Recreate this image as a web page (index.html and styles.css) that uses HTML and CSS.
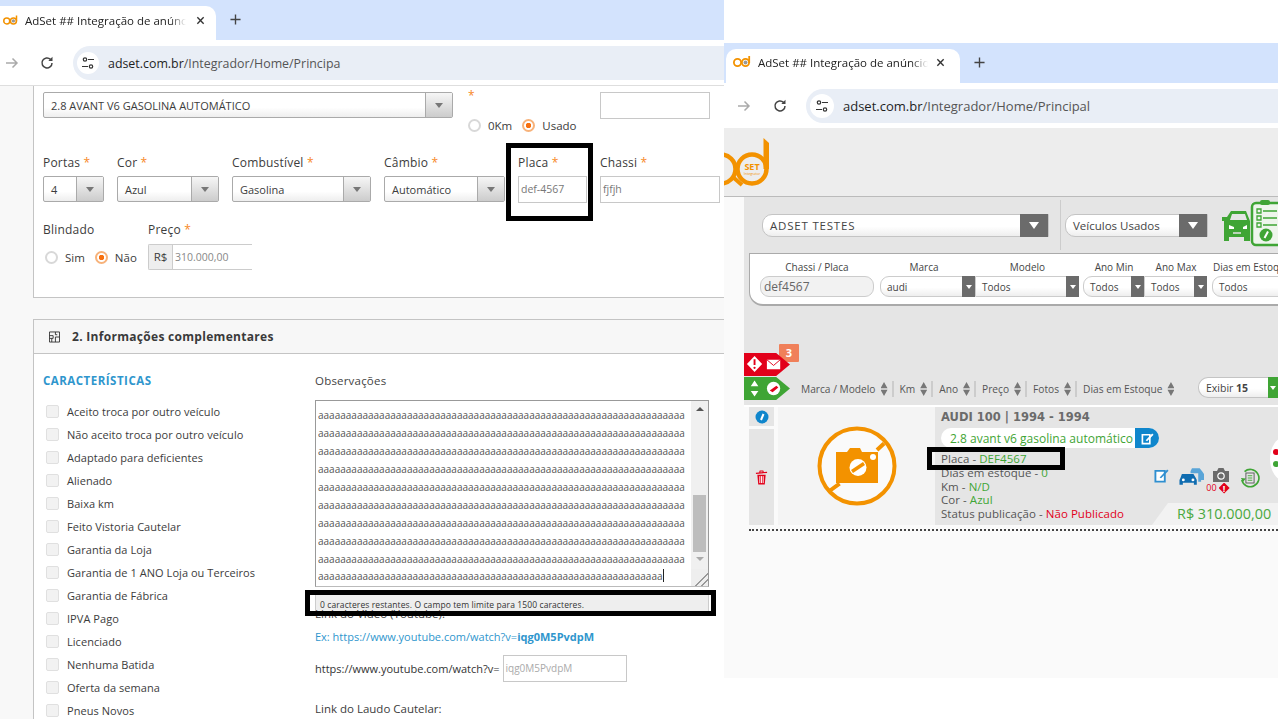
FILE: index.html
```html
<!DOCTYPE html>
<html lang="pt-br">
<head>
<meta charset="utf-8">
<title>AdSet</title>
<link rel="stylesheet" href="styles.css">
</head>
<body>
<div class="shots">

  <!-- left screenshot: ad form -->
  <section class="shot shot-left">
    <div class="tabstrip">
      <div class="tab">
        <svg class="favicon" viewBox="0 0 18 12"><circle cx="4.5" cy="6.5" r="3.6" fill="none" stroke="#f39200" stroke-width="1.8"/><circle cx="12.5" cy="6.5" r="3.6" fill="none" stroke="#f39200" stroke-width="1.8"/><path d="M16.2 0v7" stroke="#f39200" stroke-width="1.8"/><circle cx="12.5" cy="6.5" r="2" fill="#999"/></svg>
        <span class="tab-title">AdSet ## Integração de anúncio</span>
        <svg class="tab-close" viewBox="0 0 10 10"><path d="M1.5 1.5l7 7M8.5 1.5l-7 7" stroke="#333" stroke-width="1.5"/></svg>
      </div>
      <svg class="tab-new" viewBox="0 0 12 12"><path d="M6 .5v11M.5 6h11" stroke="#444" stroke-width="1.5"/></svg>
    </div>
    <div class="toolbar">
      <svg class="nav nav-fwd" viewBox="0 0 14 14"><path d="M1 7h11M7.5 2.5L12 7l-4.5 4.5" fill="none" stroke="#aaa" stroke-width="1.5"/></svg>
      <svg class="nav nav-reload" viewBox="0 0 14 14"><path d="M12 7a5 5 0 1 1-1.500-3.600" fill="none" stroke="#444" stroke-width="1.5"/><path d="M12.500 .8v4.200H8.300z" fill="#444"/></svg>
      <div class="omnibox">
        <span class="site-icon"><svg viewBox="0 0 14 14"><circle cx="4" cy="3.500" r="1.700" fill="none" stroke="#333" stroke-width="1.200"/><path d="M7 3.500h6M1 10.500h6" stroke="#333" stroke-width="1.200"/><circle cx="10" cy="10.500" r="1.700" fill="none" stroke="#333" stroke-width="1.200"/></svg></span>
        <span class="url"><b>adset.com.br</b>/Integrador/Home/Principa</span>
      </div>
    </div>
    <div class="form-page">
      <div class="form-panel">
        <div class="form-top">
          <div class="select select-model"><span>2.8 AVANT V6 GASOLINA AUTOMÁTICO</span><i class="select-arrow"></i></div>
          <div class="km-group">
            <span class="req">*</span>
            <div class="radios">
              <i class="radio"></i><span>0Km</span>
              <i class="radio radio-on"></i><span>Usado</span>
            </div>
          </div>
          <div class="input input-top"></div>
        </div>
        <div class="form-row">
          <div class="field"><label>Portas <em>*</em></label><div class="select"><span>4</span><i class="select-arrow"></i></div></div>
          <div class="field"><label>Cor <em>*</em></label><div class="select"><span>Azul</span><i class="select-arrow"></i></div></div>
          <div class="field"><label>Combustível <em>*</em></label><div class="select"><span>Gasolina</span><i class="select-arrow"></i></div></div>
          <div class="field"><label>Câmbio <em>*</em></label><div class="select"><span>Automático</span><i class="select-arrow"></i></div></div>
          <div class="field"><label>Placa <em>*</em></label><div class="input">def-4567</div></div>
          <div class="field"><label>Chassi <em>*</em></label><div class="input">fjfjh</div></div>
        </div>
        <div class="form-row-price">
          <div class="field field-armor">
            <label>Blindado</label>
            <div class="radios radios-armor">
              <i class="radio"></i><span>Sim</span>
              <i class="radio radio-on"></i><span>Não</span>
            </div>
          </div>
          <div class="field field-price">
            <label>Preço <em>*</em></label>
            <div class="price-input"><span class="addon">R$</span><span class="price-value">310.000,00</span></div>
          </div>
        </div>
      </div>

      <div class="info-panel">
        <div class="info-head">
          <svg class="info-icon" viewBox="0 0 12 12"><path d="M.5.500h11v11H.5zM.5 4.500h4v3h-4M7 .500v3h2M7 6h4.500M7 6v5.500M3 7.500v4" fill="none" stroke="#333"/></svg>
          <h2>2. Informações complementares</h2>
        </div>
        <div class="info-body">
          <div class="features">
            <h3>CARACTERÍSTICAS</h3>
            <ul class="check-list">
              <li>Aceito troca por outro veículo</li>
              <li>Não aceito troca por outro veículo</li>
              <li>Adaptado para deficientes</li>
              <li>Alienado</li>
              <li>Baixa km</li>
              <li>Feito Vistoria Cautelar</li>
              <li>Garantia da Loja</li>
              <li>Garantia de 1 ANO Loja ou Terceiros</li>
              <li>Garantia de Fábrica</li>
              <li>IPVA Pago</li>
              <li>Licenciado</li>
              <li>Nenhuma Batida</li>
              <li>Oferta da semana</li>
              <li>Pneus Novos</li>
            </ul>
          </div>
          <div class="notes">
            <div class="notes-label">Observações</div>
            <div class="notes-box">
              <div class="notes-text">
                <p>aaaaaaaaaaaaaaaaaaaaaaaaaaaaaaaaaaaaaaaaaaaaaaaaaaaaaaaaaaaaaaaaaa</p>
                <p>aaaaaaaaaaaaaaaaaaaaaaaaaaaaaaaaaaaaaaaaaaaaaaaaaaaaaaaaaaaaaaaaaa</p>
                <p>aaaaaaaaaaaaaaaaaaaaaaaaaaaaaaaaaaaaaaaaaaaaaaaaaaaaaaaaaaaaaaaaaa</p>
                <p>aaaaaaaaaaaaaaaaaaaaaaaaaaaaaaaaaaaaaaaaaaaaaaaaaaaaaaaaaaaaaaaaaa</p>
                <p>aaaaaaaaaaaaaaaaaaaaaaaaaaaaaaaaaaaaaaaaaaaaaaaaaaaaaaaaaaaaaaaaaa</p>
                <p>aaaaaaaaaaaaaaaaaaaaaaaaaaaaaaaaaaaaaaaaaaaaaaaaaaaaaaaaaaaaaaaaaa</p>
                <p>aaaaaaaaaaaaaaaaaaaaaaaaaaaaaaaaaaaaaaaaaaaaaaaaaaaaaaaaaaaaaaaaaa</p>
                <p>aaaaaaaaaaaaaaaaaaaaaaaaaaaaaaaaaaaaaaaaaaaaaaaaaaaaaaaaaaaaaaaaaa</p>
                <p>aaaaaaaaaaaaaaaaaaaaaaaaaaaaaaaaaaaaaaaaaaaaaaaaaaaaaaaaaaaaaaaaaa</p>
                <p class="notes-last">aaaaaaaaaaaaaaaaaaaaaaaaaaaaaaaaaaaaaaaaaaaaaaaaaaaaaaaaaaaaaa</p>
              </div>
              <div class="scrollbar">
                <i class="scroll-up"></i>
                <i class="scroll-thumb"></i>
                <i class="scroll-down"></i>
                <i class="scroll-corner"></i>
              </div>
            </div>
            <div class="notes-count">0 caracteres restantes. O campo tem limite para 1500 caracteres.</div>
            <div class="link-title">Link do Vídeo (Youtube):</div>
            <div class="link-example">Ex: https://www.youtube.com/watch?v=<b>iqg0M5PvdpM</b></div>
            <div class="link-row"><span>https://www.youtube.com/watch?v=</span><div class="input input-video">iqg0M5PvdpM</div></div>
            <div class="link-title link-report">Link do Laudo Cautelar:</div>
          </div>
        </div>
      </div>
    </div>
    <div class="mark mark-plate"></div>
    <div class="mark mark-count"></div>
  </section>

  <!-- right screenshot: stock list -->
  <section class="shot shot-right">
    <div class="tabstrip">
      <div class="tab">
        <svg class="favicon" viewBox="0 0 18 12"><circle cx="4.500" cy="6.500" r="3.600" fill="none" stroke="#f39200" stroke-width="1.800"/><circle cx="12.500" cy="6.500" r="3.600" fill="none" stroke="#f39200" stroke-width="1.800"/><path d="M16.200 0v7" stroke="#f39200" stroke-width="1.800"/><circle cx="12.500" cy="6.500" r="2" fill="#999"/></svg>
        <span class="tab-title">AdSet ## Integração de anúncio</span>
        <svg class="tab-close" viewBox="0 0 10 10"><path d="M1.500 1.500l7 7M8.500 1.500l-7 7" stroke="#333" stroke-width="1.500"/></svg>
      </div>
      <svg class="tab-new" viewBox="0 0 12 12"><path d="M6 .5v11M.5 6h11" stroke="#444" stroke-width="1.500"/></svg>
    </div>
    <div class="toolbar">
      <svg class="nav nav-fwd" viewBox="0 0 14 14"><path d="M1 7h11M7.500 2.500L12 7l-4.500 4.500" fill="none" stroke="#aaa" stroke-width="1.500"/></svg>
      <svg class="nav nav-reload" viewBox="0 0 14 14"><path d="M12 7a5 5 0 1 1-1.500-3.600" fill="none" stroke="#444" stroke-width="1.500"/><path d="M12.500 .8v4.200H8.300z" fill="#444"/></svg>
      <div class="omnibox">
        <span class="site-icon"><svg viewBox="0 0 14 14"><circle cx="4" cy="3.500" r="1.700" fill="none" stroke="#333" stroke-width="1.200"/><path d="M7 3.500h6M1 10.500h6" stroke="#333" stroke-width="1.200"/><circle cx="10" cy="10.500" r="1.700" fill="none" stroke="#333" stroke-width="1.200"/></svg></span>
        <span class="url"><b>adset.com.br</b>/Integrador/Home/Principal</span>
      </div>
    </div>
    <header class="brand">
      <svg class="logo" viewBox="0 0 46 60">
        <circle cx="-3" cy="39" r="14.500" fill="none" stroke="#f39200" stroke-width="4.500"/>
        <path d="M10 48l8 7" stroke="#f39200" stroke-width="4"/>
        <circle cx="28" cy="39" r="14.500" fill="none" stroke="#f39200" stroke-width="4.500"/>
        <path d="M39.500 8l5.500 5v26h-5.500z" fill="#f39200"/>
        <text x="28" y="40" class="logo-text">SET</text>
        <text x="28" y="45" class="logo-sub">Integrator</text>
      </svg>
    </header>
    <div class="stock">
      <div class="stock-main">
        <div class="store-bar">
          <div class="pill-select pill-store"><span>ADSET TESTES</span><i class="pill-arrow"></i></div>
          <i class="store-divider"></i>
          <div class="pill-select pill-type"><span>Veículos Usados</span><i class="pill-arrow"></i></div>
          <svg class="car-report" viewBox="8 0 56 56">
            <rect x="38" y="7" width="32" height="42" rx="4" fill="#eef5ec" stroke="#3fa535" stroke-width="2.500"/>
            <rect x="46" y="4" width="10" height="5" rx="2" fill="#3fa535"/>
            <path d="M43 13h4v4h-4zM43 20h4v4h-4zM43 27h4v4h-4z" fill="none" stroke="#3fa535" stroke-width="1.300"/>
            <path d="M49 15h14M49 22h14M49 29h14" stroke="#3fa535" stroke-width="1.500"/>
            <circle cx="52" cy="39" r="6.500" fill="#3fa535"/>
            <path d="M54 35.500l-3.500 6.500" stroke="#fff" stroke-width="2"/>
            <path d="M17 15h15l4 10v20h-6v-4H15v4H10V25H8v-4h5z" fill="#3fa535"/>
            <path d="M18 18h13l2 6H16z" fill="#e5e5e5"/>
            <path d="M15 29l5 2v2h-5zM33 29l-4 2v2h4z" fill="#fff"/>
            <path d="M19 37h8" stroke="#e5e5e5" stroke-width="1.500"/>
          </svg>
        </div>
        <div class="filter-card">
          <div class="filter filter-plate"><label>Chassi / Placa</label><div class="filter-input">def4567</div></div>
          <div class="filter filter-brand"><label>Marca</label><div class="filter-select filter-select-open"><span>audi</span><i class="mini-arrow"></i></div></div>
          <div class="filter filter-model"><label>Modelo</label><div class="filter-select filter-select-flat"><span>Todos</span><i class="mini-arrow"></i></div></div>
          <div class="filter filter-year"><label>Ano Min</label><div class="filter-select filter-select-open"><span>Todos</span><i class="mini-arrow"></i></div></div>
          <div class="filter filter-year"><label>Ano Max</label><div class="filter-select filter-select-flat"><span>Todos</span><i class="mini-arrow"></i></div></div>
          <div class="filter filter-days"><label>Dias em Estoque</label><div class="filter-select filter-select-open"><span>Todos</span></div></div>
        </div>
        <div class="sort-bar">
          <div class="tags">
            <span class="badge">3</span>
            <div class="tag tag-red">
              <svg viewBox="0 0 40 20" class="tag-icon"><path d="M9 1l8 8.500L9 18 1 9.500z" fill="#fff"/><path d="M9 4.500v6" stroke="#e2001a" stroke-width="2"/><circle cx="9" cy="13.500" r="1.200" fill="#e2001a"/><rect x="22" y="5" width="14" height="10" fill="#fff"/><path d="M22 5l7 6 7-6" fill="none" stroke="#e2001a"/></svg>
            </div>
            <div class="tag tag-green">
              <svg viewBox="0 0 40 20" class="tag-icon"><path d="M9 1.500l4 6H5zM9 18.500l-4-6h8z" fill="#fff"/><circle cx="29" cy="10" r="7" fill="#fff"/><path d="M25 12l7-5 2 2-6 5z" fill="#e2001a"/></svg>
            </div>
          </div>
          <div class="sort-items">
            <span class="sort-item">Marca / Modelo<i class="sort-arrows"></i></span>
            <span class="sort-item">Km<i class="sort-arrows"></i></span>
            <span class="sort-item">Ano<i class="sort-arrows"></i></span>
            <span class="sort-item">Preço<i class="sort-arrows"></i></span>
            <span class="sort-item">Fotos<i class="sort-arrows"></i></span>
            <span class="sort-item">Dias em Estoque<i class="sort-arrows"></i></span>
          </div>
          <div class="page-size"><span>Exibir <b>15</b></span><i class="page-size-arrow"></i></div>
        </div>
        <div class="vehicle">
          <div class="vehicle-side">
            <div class="side-box side-info"><svg viewBox="0 0 14 14"><circle cx="7" cy="7" r="6.500" fill="#0f86cc"/><path d="M8.500 4L6 10" stroke="#fff" stroke-width="2"/></svg></div>
            <div class="side-box side-trash"><svg viewBox="0 0 14 16"><path d="M1 3.500l12-1M5 2.500L5.500 1h3l.5 1.500" fill="none" stroke="#e2001a" stroke-width="1.200"/><path d="M2.500 5h9l-1 10.500h-7z" fill="#e2001a"/><path d="M5.200 6.500v7.500M7 6.500v7.500M8.800 6.500v7.500" stroke="#fff"/></svg></div>
          </div>
          <div class="vehicle-photo">
            <svg viewBox="0 0 80 80">
              <circle cx="40" cy="40" r="37.500" fill="#fafafa" stroke="#f39200" stroke-width="4"/>
              <path d="M19 26h11l3-4h10l2 4h16v31H19z" fill="#f39200"/>
              <circle cx="41" cy="41.500" r="8.500" fill="#fff"/>
              <path d="M35 45.500l12-8" stroke="#f39200" stroke-width="3.500"/>
              <circle cx="56" cy="31" r="3" fill="#fff"/>
              <path d="M67 17.500L60 24M22.600 57.600L11 66" stroke="#f39200" stroke-width="4"/>
            </svg>
          </div>
          <div class="vehicle-info">
            <h4>AUDI 100 | 1994 - 1994</h4>
            <div class="version"><span>2.8 avant v6 gasolina automático</span><i class="version-edit"><svg viewBox="0 0 14 14"><path d="M1.500 3h8v9.500h-8z" fill="none" stroke="#fff" stroke-width="1.800"/><path d="M5 9l7-7.500 1.500 1.500L6.500 10z" fill="#fff"/></svg></i></div>
            <ul class="vehicle-data">
              <li>Placa - <span>DEF4567</span></li>
              <li>Dias em estoque - <span>0</span></li>
              <li>Km - <span>N/D</span></li>
              <li>Cor - <span>Azul</span></li>
              <li>Status publicação - <span class="status-off">Não Publicado</span></li>
            </ul>
            <div class="vehicle-actions">
              <svg class="act-edit" viewBox="0 0 16 16"><path d="M1.500 3h10v11.500h-10z" fill="#fff" stroke="#2f8fd0" stroke-width="2"/><path d="M6 10l8-8.500 1.500 1.500L7.500 11z" fill="#2f8fd0"/></svg>
              <svg class="act-cars" viewBox="0 0 26 18"><path d="M12 3l1.500-3h8L24 3l2 3v6h-3v2h-3V5H12z" fill="#5aa5d8"/><path d="M3 6h12l2.500 4 1 2v5h-3v-2H4v2H.5v-5l1-2z" fill="#0f6cb0"/><circle cx="4.500" cy="12" r="1.500" fill="#fff"/><circle cx="14.500" cy="12" r="1.500" fill="#fff"/></svg>
              <div class="act-photo">
                <svg viewBox="0 0 16 14"><path d="M0 3h4l1.500-3h5L12 3h4v11H0z" fill="#6b6b6b"/><circle cx="8" cy="8" r="3.200" fill="#6b6b6b" stroke="#fff" stroke-width="1.200"/></svg>
                <span class="photo-count">00<i>!</i></span>
              </div>
              <svg class="act-history" viewBox="0 0 22 22"><path d="M5 4a9.500 9.500 0 1 1-3 9" fill="none" stroke="#3fa535" stroke-width="1.800"/><path d="M1 11l2.500 4 3-3.500z" fill="#3fa535"/><rect x="6.500" y="5.500" width="9" height="11" fill="none" stroke="#555"/><path d="M8.500 8.500h5M8.500 11h5M8.500 13.500h5" stroke="#3fa535"/></svg>
            </div>
            <div class="vehicle-price">R$ 310.000,00</div>
            <div class="row-menu"><i class="dot-red"></i><i class="dot-green"></i></div>
          </div>
        </div>
        <div class="vehicle-sep"></div>
      </div>
    </div>
    <div class="mark mark-car-plate"></div>
  </section>
</div>
</body>
</html>
```

FILE: styles.css
```css
* {
  margin: 0;
  padding: 0;
  box-sizing: border-box;
}
html, body {
  width: 1278px;
  height: 719px;
  overflow: hidden;
  background: #fff;
  font-family: "Open Sans", "Liberation Sans", sans-serif;
  font-size: 12px;
  color: #333;
}
i, em {
  font-style: normal;
}
ul {
  list-style: none;
}
.shots {
  display: flex;
  height: 719px;
}
.shot {
  position: relative;
  height: 719px;
  overflow: hidden;
}
.shot-left {
  width: 724px;
  flex: none;
}
.shot-right {
  flex: 1;
  padding-top: 43px;
}

/* browser chrome */
.tabstrip {
  height: 40px;
  background: #d3e3fd;
  display: flex;
  align-items: flex-end;
}
.tab {
  width: 216px;
  height: 34px;
  background: #fff;
  border-radius: 0 10px 0 0;
  display: flex;
  align-items: center;
  padding: 0 0 6px 3px;
}
.favicon {
  width: 15px;
  height: 11px;
  flex: none;
}
.tab-title {
  width: 161px;
  margin-left: 7px;
  font-size: 11.5px;
  white-space: nowrap;
  overflow: hidden;
  color: #222;
  -webkit-mask-image: linear-gradient(to right, #000 90%, transparent);
  mask-image: linear-gradient(to right, #000 90%, transparent);
}
.tab-close {
  width: 9px;
  height: 9px;
  margin-left: 10px;
}
.tab-new {
  width: 11px;
  height: 11px;
  margin: 0 0 15px 14px;
}
.toolbar {
  height: 46px;
  background: #fff;
  border-bottom: 1px solid #dedede;
  display: flex;
  align-items: flex-start;
  padding-top: 6px;
}
.nav {
  width: 14px;
  height: 14px;
  margin-top: 10px;
}
.nav-fwd {
  margin-left: 5px;
}
.nav-reload {
  margin-left: 21px;
}
.omnibox {
  flex: 1;
  height: 34px;
  margin-left: 19px;
  background: #e9eef6;
  border-radius: 17px 0 0 17px;
  display: flex;
  align-items: center;
  padding-left: 4px;
}
.site-icon {
  width: 22px;
  height: 22px;
  border-radius: 50%;
  background: #fff;
  display: flex;
  align-items: center;
  justify-content: center;
}
.site-icon svg {
  width: 14px;
  height: 14px;
}
.url {
  margin-left: 9px;
  font-size: 12.4px;
  color: #555;
  white-space: nowrap;
}
.url b {
  font-weight: 400;
  color: #1f1f1f;
}

/* form page */
.form-page {
  height: 633px;
  background: #f8f8f8;
  padding-left: 33px;
}
.form-panel {
  background: #fff;
  border-left: 1px solid #c4c4c4;
  border-bottom: 1px solid #c4c4c4;
  padding: 6px 0 27px 9px;
  color: #3c3c3c;
}
.form-top {
  display: flex;
  height: 42px;
}
.select {
  height: 26px;
  display: flex;
  border: 1px solid #aaa;
  border-radius: 2px;
  background: linear-gradient(#fff 60%, #eee);
  font-size: 11px;
  align-items: center;
}
.select span {
  flex: 1;
  padding-left: 7px;
  white-space: nowrap;
  overflow: hidden;
}
.select-arrow {
  width: 27px;
  height: 100%;
  flex: none;
  border-left: 1px solid #aaa;
  background: linear-gradient(#f6f6f6, #ccc);
  display: flex;
  align-items: center;
  justify-content: center;
}
.select-arrow::after {
  content: "";
  border: 4px solid transparent;
  border-top: 5px solid #777;
  border-bottom: 0;
}
.select-model {
  width: 410px;
}
.km-group {
  width: 132px;
  margin-left: 15px;
}
.req, em {
  color: #f7881f;
}
.req {
  display: block;
  height: 16px;
  line-height: 8px;
}
.radios {
  display: flex;
  align-items: center;
  height: 26px;
  font-size: 11.5px;
}
.km-group .radios {
  height: 17px;
  margin-top: 9px;
}
.radio {
  width: 13px;
  height: 13px;
  flex: none;
  border-radius: 50%;
  border: 2px solid #d8d8d8;
  background: #fff;
  margin-right: 7px;
}
.radio-on {
  border-color: #f7b27a;
  background: radial-gradient(circle, #f7700f 0 2.500px, #fff 3px);
  margin-left: 10px;
}
.input {
  border: 1px solid #c8c8c8;
  background: #fff;
  height: 27px;
  line-height: 25px;
  padding-left: 2px;
  font-size: 10.5px;
  color: #777;
  white-space: nowrap;
}
.input-top {
  width: 110px;
}
.form-row {
  display: grid;
  grid-template-columns: 61px 102px 139px 121px 69px 120px;
  column-gap: 13px;
  margin-top: 20px;
}
.field label {
  display: block;
  height: 22px;
  line-height: 18px;
  font-size: 12px;
  letter-spacing: .2px;
}
.form-row-price {
  display: flex;
  margin-top: 18px;
}
.field-armor {
  width: 105px;
}
.field-armor label, .field-price label {
  height: 23px;
}
.radios-armor {
  padding-left: 2px;
}
.price-input {
  width: 104px;
  height: 26px;
  display: flex;
  border: 1px solid #ccc;
  border-right: 0;
  border-radius: 2px 0 0 2px;
  font-size: 10.5px;
  line-height: 24px;
}
.addon {
  width: 24px;
  flex: none;
  background: #eee;
  border-right: 1px solid #ccc;
  text-align: center;
  font-size: 11.5px;
}
.price-value {
  padding-left: 2px;
  color: #888;
}

.info-panel {
  margin-top: 21px;
  background: #fff;
  border-top: 1px solid #c4c4c4;
  border-left: 1px solid #c4c4c4;
}
.info-head {
  height: 34px;
  background: #f7f7f7;
  border-bottom: 1px solid #c4c4c4;
  display: flex;
  align-items: center;
  padding-left: 15px;
}
.info-icon {
  width: 11px;
  height: 12px;
}
.info-head h2 {
  margin-left: 12px;
  font-size: 12px;
  font-weight: 700;
  color: #3a3a3a;
  letter-spacing: .3px;
}
.info-body {
  display: grid;
  grid-template-columns: 272px 394px;
  padding: 18px 0 0 9px;
}
.features h3 {
  height: 16px;
  line-height: 18px;
  font-size: 11.5px;
  font-weight: 700;
  color: #2f96cd;
  letter-spacing: .5px;
}
.check-list {
  margin-top: 12px;
}
.check-list li {
  height: 23px;
  line-height: 23px;
  font-size: 11px;
  letter-spacing: .05px;
  display: flex;
  align-items: center;
  color: #3c3c3c;
  white-space: nowrap;
}
.check-list li::before {
  content: "";
  width: 11px;
  height: 11px;
  margin: 0 8px 0 3px;
  border-radius: 2px;
  background: #f2f2f2;
  border: 1px solid #e0e0e0;
}
.notes-label {
  height: 28px;
  line-height: 18px;
  font-size: 11.5px;
  letter-spacing: .2px;
  color: #444;
}
.notes-box {
  height: 187px;
  display: flex;
  border: 1px solid #999;
  border-bottom-color: #bbb;
  background: #fff;
}
.notes-text {
  flex: 1;
  padding: 5px 0 0 2px;
  overflow: hidden;
}
.notes-text p {
  height: 18px;
  line-height: 18px;
  font-size: 10px;
  color: #555;
  white-space: nowrap;
  overflow: hidden;
  width: 368px;
}
.notes-text .notes-last {
  width: auto;
  margin-top: -1px;
}
.notes-last::after {
  content: "";
  display: inline-block;
  width: 1px;
  height: 13px;
  background: #222;
  vertical-align: -2px;
}
.scrollbar {
  width: 17px;
  flex: none;
  background: #f0f0f0;
  display: flex;
  flex-direction: column;
  align-items: center;
}
.scroll-up {
  margin-top: 6px;
  border: 4px solid transparent;
  border-bottom: 4px solid #555;
  border-top: 0;
}
.scroll-thumb {
  width: 13px;
  height: 57px;
  margin-top: 84px;
  background: #bdbdbd;
}
.scroll-down {
  margin-top: 5px;
  border: 4px solid transparent;
  border-top: 4px solid #aaa;
  border-bottom: 0;
}
.scroll-corner {
  width: 17px;
  height: 17px;
  margin-top: auto;
  background: linear-gradient(135deg, #eee 60%, #999 60% 65%, #eee 65% 78%, #999 78% 83%, #eee 83%);
}
.notes-count {
  height: 20px;
  margin-top: 5px;
  padding-left: 4px;
  line-height: 24px;
  background: #eee;
  border: 1px solid #ccc;
  font-size: 8.500px;
  color: #333;
  letter-spacing: .1px;
}
.link-title {
  height: 16px;
  line-height: 16px;
  margin-top: -6px;
  font-size: 11.5px;
  color: #3c3c3c;
}
.link-example {
  margin-top: 7px;
  height: 16px;
  line-height: 16px;
  font-size: 11px;
  color: #2f96cd;
  white-space: nowrap;
}
.link-row {
  display: flex;
  align-items: center;
  margin-top: 10px;
  font-size: 11px;
  height: 27px;
}
.input-video {
  width: 124px;
  margin-left: 3px;
  color: #aaa;
  font-size: 10px;
}
.link-report {
  margin-top: 19px;
}

/* black highlight boxes drawn over the screenshots */
.mark {
  position: absolute;
  border: 5px solid #000;
}
.mark-plate {
  left: 506px;
  top: 143px;
  width: 87px;
  height: 78px;
}
.mark-count {
  left: 305px;
  top: 590px;
  width: 411px;
  height: 26px;
}
.mark-car-plate {
  left: 203px;
  top: 447px;
  width: 138px;
  height: 23px;
}

/* right screenshot */
.shot-right .tabstrip {
  padding-left: 2px;
}
.shot-right .tab {
  width: 234px;
  border-radius: 10px 10px 0 0;
  padding-left: 7px;
  padding-bottom: 8px;
}
.shot-right .favicon {
  width: 18px;
  height: 12px;
}
.shot-right .tab-title {
  margin-left: 7px;
  width: 170px;
}
.shot-right .tab-close {
  margin-left: 8px;
}
.shot-right .toolbar {
  height: 45px;
  border-bottom: 0;
}
.shot-right .nav-fwd {
  margin-left: 13px;
}
.shot-right .nav-reload {
  margin-left: 22px;
}
.shot-right .omnibox {
  margin-left: 19px;
}
.shot-right .site-icon {
  width: 24px;
  height: 24px;
}
.shot-right .url {
  margin-left: 9px;
  font-size: 13px;
}
.brand {
  height: 69px;
  background: #ededed;
  border-bottom: 1px solid #bbb;
  overflow: hidden;
}
.logo {
  display: block;
  width: 46px;
  height: 60px;
  margin-top: 2px;
  overflow: hidden;
}
.logo-text {
  font-size: 9px;
  font-weight: 700;
  fill: #f39200;
  text-anchor: middle;
}
.logo-sub {
  font-size: 3.500px;
  fill: #f39200;
  text-anchor: middle;
}
.stock {
  height: 481px;
  padding-left: 20px;
  background: #fafafa;
}
.stock-main {
  background: linear-gradient(#e5e5e5 208px, #fafafa 208px);
}
.store-bar {
  height: 56px;
  display: flex;
  align-items: flex-start;
  padding: 17px 0 0 18px;
  position: relative;
}
.pill-select {
  height: 23px;
  display: flex;
  align-items: center;
  border: 1px solid #c4c4c4;
  border-radius: 10px 0 0 10px;
  background: linear-gradient(#fff 55%, #eee);
  font-size: 11.5px;
  color: #444;
}
.pill-select span {
  flex: 1;
  padding-left: 7px;
  white-space: nowrap;
}
.pill-arrow {
  width: 28px;
  height: 23px;
  flex: none;
  background: #6b6b6b;
  display: flex;
  align-items: center;
  justify-content: center;
}
.pill-arrow::after {
  content: "";
  border: 5px solid transparent;
  border-top: 7px solid #fff;
  border-bottom: 0;
}
.pill-store {
  width: 287px;
  letter-spacing: .8px;
}
.store-divider {
  width: 1px;
  height: 50px;
  margin: -14px 4px 0 11px;
  background: #ccc;
}
.pill-type {
  width: 143px;
}
.car-report {
  width: 56px;
  height: 56px;
  margin: -18px 0 0 14px;
  flex: none;
}
.filter-card {
  height: 53px;
  margin-left: 5px;
  background: #fff;
  border: 1px solid #aaa;
  border-width: 1px 0 2px 1px;
  border-radius: 0 0 0 14px;
  display: flex;
  padding: 6px 0 0 10px;
  overflow: hidden;
}
.filter {
  flex: none;
}
.filter label {
  display: block;
  height: 16px;
  line-height: 15px;
  text-align: center;
  font-size: 10px;
  color: #444;
  white-space: nowrap;
}
.filter-plate {
  width: 114px;
}
.filter-brand {
  width: 96px;
  margin-left: 6px;
}
.filter-brand label {
  padding-right: 8px;
}
.filter-model {
  width: 103px;
}
.filter-year {
  width: 62px;
}
.filter-year:nth-child(4) {
  margin-left: 4px;
}
.filter-days {
  width: 80px;
  margin-left: 5px;
}
.filter-input {
  height: 21px;
  line-height: 19px;
  padding-left: 3px;
  border: 1px solid #ccc;
  border-radius: 9px;
  background: #f2f2f2;
  font-size: 12px;
  color: #666;
}
.filter-select {
  height: 21px;
  display: flex;
  align-items: center;
  background: linear-gradient(#fff 55%, #eee);
  font-size: 10px;
  color: #444;
  border: 1px solid #ccc;
}
.filter-select-open {
  border-radius: 9px 0 0 9px;
}
.filter-select-flat {
  border-width: 1px 0;
}
.filter-select span {
  flex: 1;
  padding-left: 6px;
}
.mini-arrow {
  width: 13px;
  height: 21px;
  flex: none;
  background: #6b6b6b;
  display: flex;
  align-items: center;
  justify-content: center;
}
.mini-arrow::after {
  content: "";
  border: 3px solid transparent;
  border-top: 4px solid #fff;
  border-bottom: 0;
}
.sort-bar {
  height: 99px;
  display: flex;
  align-items: flex-end;
  padding-bottom: 5px;
  position: relative;
}
.tags {
  width: 46px;
  flex: none;
}
.badge {
  position: absolute;
  left: 35px;
  top: 38px;
  width: 20px;
  height: 18px;
  line-height: 18px;
  background: #f0805a;
  color: #fff;
  font-weight: 700;
  font-size: 11px;
  text-align: center;
  border-radius: 1px;
}
.tag {
  height: 23px;
  clip-path: polygon(0 0, 70% 0, 100% 50%, 70% 100%, 0 100%);
  margin-top: 1px;
  display: flex;
  align-items: center;
  padding-left: 2px;
}
.tag-red {
  background: #e2001a;
}
.tag-green {
  background: #3fa535;
}
.tag-icon {
  width: 38px;
  height: 19px;
}
.sort-items {
  display: flex;
  margin-left: 11px;
  height: 20px;
  align-items: center;
  margin-bottom: 1px;
  font-size: 10.2px;
  color: #555;
  white-space: nowrap;
}
.sort-item {
  display: flex;
  align-items: center;
  padding-right: 4px;
  margin-right: 6px;
  border-right: 2px solid #ccc;
  height: 16px;
}
.sort-item:last-child {
  border-right: 0;
  margin-right: 0;
}
.sort-arrows {
  width: 7px;
  height: 14px;
  margin-left: 5px;
  background: #777;
  clip-path: polygon(50% 0, 100% 45%, 0 45%, 0 55%, 100% 55%, 50% 100%, 0 55%, 0 45%);
}
.page-size {
  width: 80px;
  height: 21px;
  margin: 0 0 2px auto;
  display: flex;
  align-items: center;
  justify-content: space-between;
  border: 1px solid #c4c4c4;
  border-right: 0;
  border-radius: 10px 0 0 10px;
  background: linear-gradient(#fff 55%, #eee);
  padding-left: 7px;
  font-size: 10.5px;
  color: #444;
  flex: none;
}
.page-size-arrow {
  width: 10px;
  height: 21px;
  background: #3fa535;
  display: flex;
  align-items: center;
  justify-content: center;
}
.page-size-arrow::after {
  content: "";
  border: 3px solid transparent;
  border-top: 4px solid #fff;
  border-bottom: 0;
}
.vehicle {
  height: 120px;
  display: flex;
  border-top: 2px solid #fff;
  padding-left: 5px;
  background: #fafafa;
}
.vehicle-side {
  width: 25px;
  flex: none;
  display: flex;
  flex-direction: column;
  gap: 3px;
}
.side-box {
  background: #e5e5e5;
  display: flex;
  align-items: center;
  justify-content: center;
}
.side-info {
  height: 19px;
}
.side-info svg {
  width: 14px;
  height: 14px;
}
.side-trash {
  flex: 1;
}
.side-trash svg {
  width: 13px;
  height: 15px;
}
.vehicle-photo {
  width: 157px;
  margin-left: 4px;
  background: #f4f4f4;
  display: flex;
  align-items: center;
  justify-content: center;
  flex: none;
}
.vehicle-photo svg {
  width: 80px;
  height: 80px;
}
.vehicle-info {
  flex: 1;
  background: #e5e5e5;
  position: relative;
  padding: 2px 0 0 6px;
  overflow: hidden;
}
.vehicle-info h4 {
  height: 18px;
  line-height: 17px;
  font-family: "DejaVu Sans", sans-serif;
  font-size: 11.500px;
  font-weight: 700;
  color: #6b6b6b;
}
.version {
  width: 218px;
  height: 20px;
  margin-top: 1px;
  background: #fff;
  border-radius: 10px;
  display: flex;
  align-items: center;
  justify-content: space-between;
  padding-left: 9px;
  overflow: hidden;
  color: #3fa535;
  font-size: 12px;
}
.version-edit {
  width: 24px;
  height: 20px;
  background: #0f86cc;
  display: flex;
  align-items: center;
  justify-content: center;
}
.version-edit svg {
  width: 13px;
  height: 13px;
}
.vehicle-data {
  margin-top: 4px;
  font-size: 11.500px;
  letter-spacing: .05px;
  line-height: 13.800px;
  color: #555;
}
.vehicle-data span {
  color: #3fa535;
}
.vehicle-data .status-off {
  color: #e2001a;
}
.vehicle-actions {
  position: absolute;
  left: 219px;
  top: 61px;
  display: flex;
  align-items: flex-start;
  gap: 10px;
}
.act-edit {
  width: 15px;
  height: 15px;
}
.act-cars {
  width: 25px;
  height: 18px;
}
.act-photo {
  width: 18px;
  margin-left: -2px;
  display: flex;
  flex-direction: column;
  align-items: center;
}
.act-photo svg {
  width: 16px;
  height: 14px;
}
.photo-count {
  display: flex;
  align-items: center;
  gap: 2px;
  margin-left: -6px;
  color: #e2001a;
  font-size: 9px;
  line-height: 12px;
  white-space: nowrap;
}
.photo-count i {
  width: 11px;
  height: 11px;
  background: #e2001a;
  color: #fff;
  text-align: center;
  line-height: 11px;
  font-weight: 700;
  clip-path: polygon(50% 0, 100% 50%, 50% 100%, 0 50%);
}
.act-history {
  width: 20px;
  height: 20px;
}
.vehicle-price {
  position: absolute;
  right: 0;
  bottom: 0;
  width: 126px;
  height: 22px;
  line-height: 22px;
  padding-left: 25px;
  background: #f2f2f2;
  clip-path: polygon(16px 0, 100% 0, 100% 100%, 0 100%);
  color: #4aa840;
  font-size: 14.400px;
  white-space: nowrap;
}
.row-menu {
  position: absolute;
  right: -22px;
  top: 30px;
  width: 30px;
  height: 44px;
  border-radius: 50%;
  background: #fff;
}
.dot-red, .dot-green {
  position: absolute;
  left: 3px;
  width: 6px;
  height: 6px;
  border-radius: 50%;
}
.dot-red {
  top: 12px;
  background: #e2001a;
}
.dot-green {
  top: 24px;
  background: #3fa535;
}
.vehicle-sep {
  height: 2px;
  margin: 4px 0 0 5px;
  border-top: 2px dotted #444;
}
```
